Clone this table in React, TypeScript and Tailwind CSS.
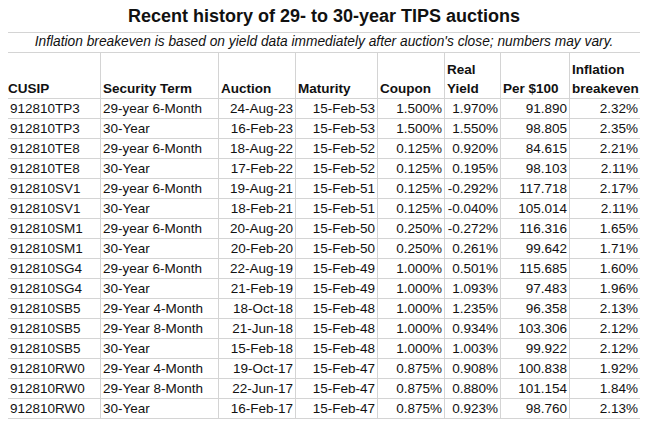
const headers = ['CUSIP', 'Security Term', 'Auction', 'Maturity', 'Coupon', 'Real Yield', 'Per $100', 'Inflation breakeven']

const rows: string[][] = [
  ['912810TP3', '29-year 6-Month', '24-Aug-23', '15-Feb-53', '1.500%', '1.970%', '91.890', '2.32%'],
  ['912810TP3', '30-Year', '16-Feb-23', '15-Feb-53', '1.500%', '1.550%', '98.805', '2.35%'],
  ['912810TE8', '29-year 6-Month', '18-Aug-22', '15-Feb-52', '0.125%', '0.920%', '84.615', '2.21%'],
  ['912810TE8', '30-Year', '17-Feb-22', '15-Feb-52', '0.125%', '0.195%', '98.103', '2.11%'],
  ['912810SV1', '29-year 6-Month', '19-Aug-21', '15-Feb-51', '0.125%', '-0.292%', '117.718', '2.17%'],
  ['912810SV1', '30-Year', '18-Feb-21', '15-Feb-51', '0.125%', '-0.040%', '105.014', '2.11%'],
  ['912810SM1', '29-year 6-Month', '20-Aug-20', '15-Feb-50', '0.250%', '-0.272%', '116.316', '1.65%'],
  ['912810SM1', '30-Year', '20-Feb-20', '15-Feb-50', '0.250%', '0.261%', '99.642', '1.71%'],
  ['912810SG4', '29-year 6-Month', '22-Aug-19', '15-Feb-49', '1.000%', '0.501%', '115.685', '1.60%'],
  ['912810SG4', '30-Year', '21-Feb-19', '15-Feb-49', '1.000%', '1.093%', '97.483', '1.96%'],
  ['912810SB5', '29-Year 4-Month', '18-Oct-18', '15-Feb-48', '1.000%', '1.235%', '96.358', '2.13%'],
  ['912810SB5', '29-Year 8-Month', '21-Jun-18', '15-Feb-48', '1.000%', '0.934%', '103.306', '2.12%'],
  ['912810SB5', '30-Year', '15-Feb-18', '15-Feb-48', '1.000%', '1.003%', '99.922', '2.12%'],
  ['912810RW0', '29-Year 4-Month', '19-Oct-17', '15-Feb-47', '0.875%', '0.908%', '100.838', '1.92%'],
  ['912810RW0', '29-Year 8-Month', '22-Jun-17', '15-Feb-47', '0.875%', '0.880%', '101.154', '1.84%'],
  ['912810RW0', '30-Year', '16-Feb-17', '15-Feb-47', '0.875%', '0.923%', '98.760', '2.13%'],
]

export default function App() {
  return (
    <div className="h-[429px] w-[647px] bg-white pl-[8px] text-[#111]" style={{ fontFamily: '"Liberation Sans", Arial, sans-serif' }}>
      <div className="grid w-[632px] grid-cols-[93px_118px_77px_82px_67px_56px_69px_70px] text-[13.5px]">
        <div className="col-span-8 flex h-[33px] items-center justify-center border-b border-[#d4d4d4] text-[18px] font-bold">
          Recent history of 29- to 30-year TIPS auctions
        </div>
        <div className="col-span-8 flex h-[20px] items-center justify-center border-b border-[#d4d4d4] text-[13.75px] italic">
          Inflation breakeven is based on yield data immediately after auction's close; numbers may vary.
        </div>
        {headers.map((h, i) => (
          <div
            key={h}
            className={`flex h-[46px] items-end border-b border-[#d4d4d4] font-bold leading-[19px] ${i === 0 ? 'pl-0' : 'pl-[2px]'} ${i < 7 ? 'border-r' : ''}`}
          >
            <span className={i === 7 ? 'w-[66px]' : i === 5 ? 'w-[40px]' : ''}>{h}</span>
          </div>
        ))}
        {rows.map((r) =>
          r.map((c, i) => (
            <div
              key={r[0] + r[2] + i}
              className={`h-[20px] truncate border-b border-[#d4d4d4] leading-[19px] ${i < 2 ? 'pl-[2px] text-left' : 'pr-[2px] text-right'} ${i === 0 ? 'pl-0' : ''} ${i < 7 ? 'border-r' : ''}`}
            >
              {c}
            </div>
          )),
        )}
      </div>
    </div>
  )
}
